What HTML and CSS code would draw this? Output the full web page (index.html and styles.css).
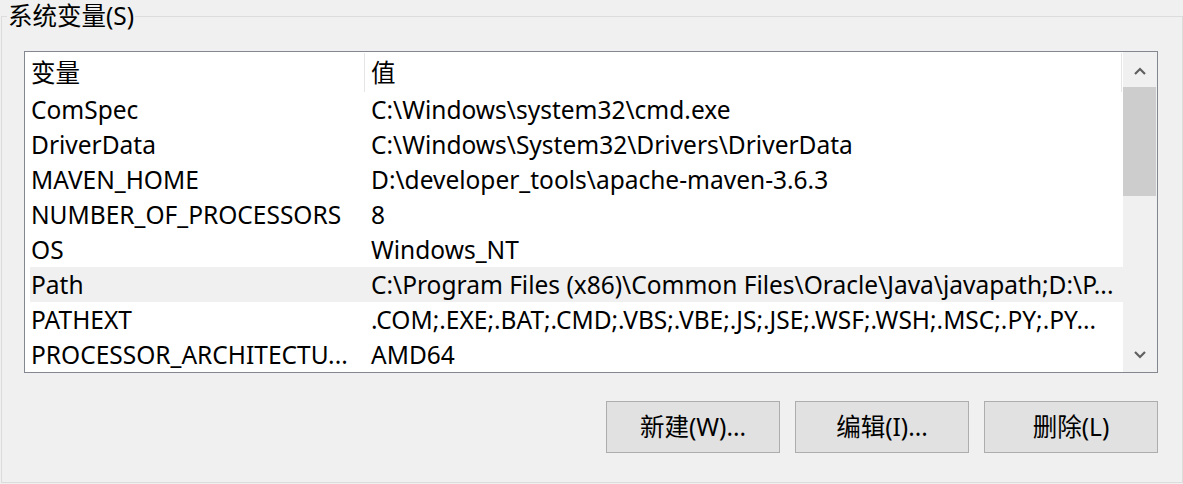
FILE: index.html
```html
<!DOCTYPE html>
<html lang="zh-CN">
<head>
<meta charset="utf-8">
<title>系统变量</title>
<link rel="stylesheet" href="styles.css">
</head>
<body>
<fieldset class="group">
  <legend class="group-title">系统变量(S)</legend>
  <div class="listbox">
    <div class="list-main">
      <div class="list-header">
        <div class="hcell hname">变量</div>
        <div class="hcell hvalue">值</div>
      </div>
      <div class="row"><div class="cell name">ComSpec</div><div class="cell value">C:\Windows\system32\cmd.exe</div></div>
      <div class="row"><div class="cell name">DriverData</div><div class="cell value">C:\Windows\System32\Drivers\DriverData</div></div>
      <div class="row"><div class="cell name">MAVEN_HOME</div><div class="cell value">D:\developer_tools\apache-maven-3.6.3</div></div>
      <div class="row"><div class="cell name">NUMBER_OF_PROCESSORS</div><div class="cell value">8</div></div>
      <div class="row"><div class="cell name">OS</div><div class="cell value">Windows_NT</div></div>
      <div class="row selected"><div class="cell name">Path</div><div class="cell value">C:\Program Files (x86)\Common Files\Oracle\Java\javapath;D:\P...</div></div>
      <div class="row"><div class="cell name">PATHEXT</div><div class="cell value">.COM;.EXE;.BAT;.CMD;.VBS;.VBE;.JS;.JSE;.WSF;.WSH;.MSC;.PY;.PY...</div></div>
      <div class="row"><div class="cell name">PROCESSOR_ARCHITECTU...</div><div class="cell value">AMD64</div></div>
    </div>
    <div class="scrollbar">
      <div class="sb-btn sb-up">
        <svg width="12" height="8" viewBox="0 0 12 8"><path d="M1 7 L6 2 L11 7" fill="none" stroke="#606060" stroke-width="2.2"/></svg>
      </div>
      <div class="sb-thumb"></div>
      <div class="sb-track"></div>
      <div class="sb-btn sb-down">
        <svg width="12" height="8" viewBox="0 0 12 8"><path d="M1 1 L6 6 L11 1" fill="none" stroke="#606060" stroke-width="2.2"/></svg>
      </div>
    </div>
  </div>
  <div class="buttons">
    <button class="btn">新建(W)...</button>
    <button class="btn">编辑(I)...</button>
    <button class="btn">删除(L)</button>
  </div>
</fieldset>
</body>
</html>
```
FILE: styles.css
```css
html, body {
  margin: 0;
  padding: 0;
  background: #f0f0f0;
  overflow: hidden;
}
body {
  width: 1183px;
  height: 484px;
  font-family: "Noto Sans", "Noto Sans CJK SC", sans-serif;
  font-size: 24.5px;
  color: #000;
}
.group {
  box-sizing: border-box;
  margin: 0 0 0 1px;
  width: 1182px;
  height: 483px;
  border: 1px solid #dcdcdc;
  padding: 19px 24px 0 5px;
  min-width: 0;
}
.group-title {
  padding: 0 1px;
  line-height: 32px;
  color: #000;
}
.listbox {
  margin-left: 17px;
  height: 322px;
  box-sizing: border-box;
  border: 1px solid #828790;
  background: #fff;
  display: flex;
}
.list-main {
  flex: 1;
  padding-left: 5px;
  overflow: hidden;
  min-width: 0;
}
.list-header {
  display: grid;
  grid-template-columns: 335px 757px;
  height: 40px;
}
.hcell {
  box-sizing: border-box;
  border-right: 1px solid #e5e5e5;
  margin: 1px 0 0;
  height: 39px;
  line-height: 35px;
  padding-top: 2px;
  white-space: nowrap;
  overflow: hidden;
}
.hname { padding-left: 1px; }
.hvalue { padding-left: 6px; }
.row {
  display: grid;
  grid-template-columns: 335px 1fr;
  height: 35px;
  line-height: 35px;
}
.row.selected {
  background: #f0f0f0;
}
.cell {
  white-space: nowrap;
  overflow: hidden;
  text-overflow: clip;
}
.cell.name { padding-left: 1px; }
.cell.value { padding-left: 6px; padding-right: 4px; }
.scrollbar {
  width: 34px;
  flex: none;
  background: #f0f0f0;
  display: flex;
  flex-direction: column;
}
.sb-btn {
  height: 35px;
  flex: none;
  display: flex;
  align-items: center;
  justify-content: center;
}
.sb-up { padding-top: 2px; box-sizing: border-box; }
.sb-thumb {
  height: 109px;
  flex: none;
  background: #cdcdcd;
  margin-right: 1px;
}
.sb-track { flex: 1; }
.buttons {
  display: flex;
  justify-content: flex-end;
  gap: 15px;
  margin-top: 28px;
}
.btn {
  box-sizing: border-box;
  width: 174px;
  height: 52px;
  border: 1px solid #adadad;
  background: #e1e1e1;
  font-family: "Noto Sans", "Noto Sans CJK SC", sans-serif;
  font-size: 24.5px;
  color: #000;
  padding: 0;
  line-height: 34px;
}
```
